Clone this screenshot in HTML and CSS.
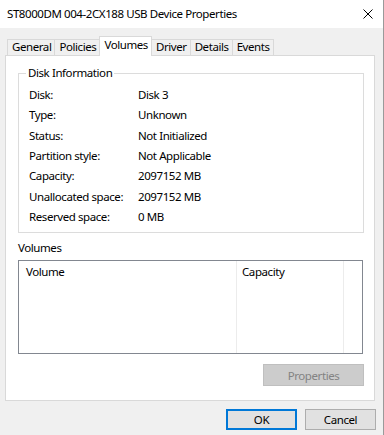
FILE: index.html
```html
<html>
  <head>
    <meta name='viewport' content='width=device-width, initial-scale=1.0'>
    <title>ST8000DM 004-2CX188 USB Device Properties</title>
    <link rel="stylesheet" href="styles.css">
  </head>

  <body>

    <div class="window">
      <div class="titlebar">
        <span class="title">ST8000DM 004-2CX188 USB Device Properties</span>
        <svg class="close" width="10" height="10" viewBox="0 0 10 10">
          <path d="M0.5 0.5 L9.5 9.5 M9.5 0.5 L0.5 9.5" stroke="#000" stroke-width="1" fill="none"/>
        </svg>
      </div>

      <div class="content">
        <div class="tabs">
          <div class="tab">General</div>
          <div class="tab">Policies</div>
          <div class="tab selected">Volumes</div>
          <div class="tab">Driver</div>
          <div class="tab">Details</div>
          <div class="tab">Events</div>
        </div>

        <div class="panel">
          <fieldset class="group">
            <legend>Disk Information</legend>
            <div class="info">
              <div class="info-label">Disk:</div><div>Disk 3</div>
              <div class="info-label">Type:</div><div>Unknown</div>
              <div class="info-label">Status:</div><div>Not Initialized</div>
              <div class="info-label">Partition style:</div><div>Not Applicable</div>
              <div class="info-label">Capacity:</div><div>2097152 MB</div>
              <div class="info-label">Unallocated space:</div><div>2097152 MB</div>
              <div class="info-label">Reserved space:</div><div>0 MB</div>
            </div>
          </fieldset>

          <div class="section-label">Volumes</div>
          <div class="listview">
            <div class="col col-volume">Volume</div>
            <div class="col col-capacity">Capacity</div>
            <div class="col col-rest"></div>
          </div>

          <div class="panel-actions">
            <button class="btn btn-props" disabled>Properties</button>
          </div>
        </div>

        <div class="dialog-actions">
          <button class="btn btn-default">OK</button>
          <button class="btn">Cancel</button>
        </div>
      </div>
    </div>

  </body>
</html>
```

FILE: styles.css
```css
* {
  margin: 0;
  padding: 0;
  box-sizing: border-box;
}

html, body {
  width: 100%;
  height: 100%;
}

body {
  background: #f0f0f0;
  font-family: "Noto Sans", "Open Sans", sans-serif;
  font-size: 11.5px;
  letter-spacing: -0.42px;
  color: #000;
}

.window {
  width: 384px;
  height: 435px;
  border-right: 1px solid #9a9a9a;
  background: #f0f0f0;
}

.titlebar {
  height: 28px;
  background: #fff;
  display: flex;
  align-items: center;
  justify-content: space-between;
  padding: 0 10px 0 7px;
}

.title {
  line-height: 14px;
}

.tabs {
  display: flex;
  align-items: flex-end;
  height: 19px;
  margin: 8px 0 0 7px;
}

.tab {
  height: 16px;
  line-height: 14px;
  padding: 0 3px 0 4px;
  border: 1px solid #d9d9d9;
  border-bottom: none;
  background: #f0f0f0;
  margin-left: -1px;
}

.tab:first-child {
  margin-left: 0;
}

.tab.selected {
  height: 20px;
  margin-bottom: -1px;
  padding-top: 1px;
  background: #fff;
  position: relative;
  z-index: 1;
}

.panel {
  margin-left: 5px;
  width: 370px;
  height: 346px;
  background: #fff;
  border: 1px solid #d9d9d9;
  padding: 10px 10px 0 12px;
}

.group {
  border: 1px solid #dcdcdc;
  padding: 5px 7px 5px 7px;
  margin: 0;
  width: 346px;
}

.group legend {
  padding: 0 2px;
  line-height: 14px;
}

.info {
  display: grid;
  grid-template-columns: 109px 1fr;
  line-height: 20.33px;
  padding-left: 3px;
}

.section-label {
  margin-top: 8px;
  line-height: 14px;
}

.listview {
  margin-top: 5px;
  width: 345px;
  height: 94px;
  border: 1px solid #828790;
  display: flex;
}

.col {
  padding-top: 4px;
  line-height: 14px;
  border-right: 1px solid #ececec;
}

.col-volume {
  width: 218px;
  padding-left: 7px;
}

.col-capacity {
  width: 107px;
  padding-left: 5px;
}

.col-rest {
  flex: 1;
  border-right: none;
}

.panel-actions {
  display: flex;
  justify-content: flex-end;
  margin-top: 10px;
}

.btn {
  font-family: inherit;
  font-size: 11.5px;
  letter-spacing: -0.42px;
  height: 21px;
  width: 71px;
  background: #e1e1e1;
  border: 1px solid #adadad;
  color: #000;
}

.btn-props {
  width: 101px;
  height: 22px;
  background: #cccccc;
  border-color: #bfbfbf;
  color: #838383;
}

.btn-default {
  border: 2px solid #0078d7;
}

.dialog-actions {
  display: flex;
  justify-content: flex-end;
  gap: 8px;
  margin-top: 8px;
  padding-right: 7px;
}
```
